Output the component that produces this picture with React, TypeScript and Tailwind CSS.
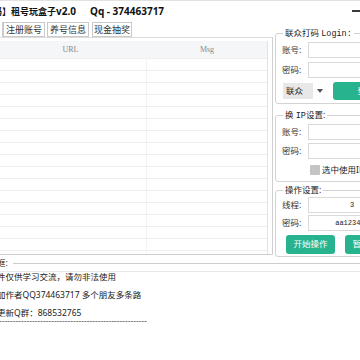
import { ReactNode } from 'react';

const tabs = ['注册账号', '养号信息', '现金抽奖'];
const rows = Array.from({ length: 17 });

function Group({ title, className, children }: { title: ReactNode; className?: string; children: ReactNode }) {
  return (
    <fieldset className={`w-[130px] border border-[#d3d3d3] rounded-[3px] ${className ?? ''}`}>
      <legend className="ml-[7px] px-[2px] text-[8.5px] leading-[12px] text-[#222]">{title}</legend>
      {children}
    </fieldset>
  );
}

function Field({ label, value }: { label: string; value?: string }) {
  return (
    <div className="h-[16px] flex items-center">
      <span className="w-[26px] text-[8.5px] text-[#333]">{label}</span>
      <div className="w-[88px] h-[16px] border border-[#d9d9d9] bg-white flex items-center justify-center font-['Liberation_Mono',monospace] text-[7px] text-[#222]">
        {value}
      </div>
    </div>
  );
}

function TealButton({ label, className }: { label: string; className: string }) {
  return (
    <button className={`rounded-[3px] bg-[#26b38e] text-white text-[8.5px] flex items-center justify-center shrink-0 ${className}`}>
      {label}
    </button>
  );
}

export default function App() {
  return (
    <div className="w-[360px] h-[360px] overflow-hidden bg-white text-[#222] font-['Noto_Sans','Noto_Sans_CJK_SC',sans-serif] flex flex-col">
      {/* title bar */}
      <div className="h-[21px] shrink-0 flex items-center border-t border-[#e2e2e2] whitespace-nowrap">
        <span className="ml-[-43px] text-[9px] font-bold text-[#111]">
          【联众打码】租号玩盒子<span className="text-[10px]">v2.0</span>
        </span>
        <span className="ml-[14px] text-[10px] font-bold text-[#111]">Qq - 374463717</span>
        <span className="ml-auto mr-[-2px] w-[10px] h-[2px] bg-[#3a3a3a]" />
      </div>

      <div className="h-[234px] shrink-0 flex">
        {/* left: tabs + grid */}
        <div className="w-[273px] shrink-0 flex flex-col">
          <div className="h-[16px] flex items-start">
            <div className="w-[3px] h-[15px] mt-[1px] border-r border-[#cacaca]" />
            {tabs.map((t, i) => (
              <div
                key={t}
                className={`h-[15px] mt-[1px] border border-[#cacaca] bg-white text-[9px] text-[#333] flex items-center justify-center ${
                  i === 0 ? 'w-[42px]' : i === 1 ? 'ml-[2px] w-[42px]' : 'ml-[3px] w-[40px]'
                }`}
              >
                {t}
              </div>
            ))}
          </div>
          <div className="h-[218px] border-t border-t-[#dcdcdc] border-r border-b border-r-[#cfcfcf] border-b-[#cfcfcf] pt-[3px] pr-[4px] overflow-hidden">
            <div className="ml-[-6px] h-full border-r border-[#e2e2e2] flex flex-col overflow-hidden">
              <div className="h-[18px] shrink-0 flex bg-[#f5f6f7] border-b border-[#f0f0f0] text-[8px] text-[#8a8a8a] font-['Liberation_Serif',serif]">
                <div className="w-[153px] flex items-center justify-center">URL</div>
                <div className="flex-1 flex items-center justify-center">Msg</div>
              </div>
              {rows.map((_, i) => (
                <div key={i} className="h-[12px] shrink-0 flex border-b border-[#eeeeee]">
                  <div className="w-[153px] border-r border-[#f2f2f2]" />
                  <div className="flex-1" />
                </div>
              ))}
            </div>
          </div>
        </div>

        {/* right: settings */}
        <div className="ml-[2px] flex flex-col">
          <Group
            className="mt-[6px]"
            title={
              <>
                联众打码 <span className="font-['Liberation_Mono',monospace]">Login:</span>
              </>
            }
          >
            <div className="pt-[2px] pb-[3px] pl-[6px] flex flex-col gap-[4px]">
              <Field label="账号:" />
              <Field label="密码:" />
              <div className="h-[18px] flex items-center">
                <span className="ml-[1px] w-[30px] h-[16px] bg-[#e8e8e8] text-[8.5px] flex items-center pl-[3px]">联众</span>
                <svg className="ml-[4px] shrink-0" width="6" height="4" viewBox="0 0 6 4">
                  <path d="M0 0h6L3 4z" fill="#555" />
                </svg>
                <TealButton label="登录" className="ml-[10px] w-[66px] h-[18px]" />
              </div>
            </div>
          </Group>

          <Group
            className="mt-[5px]"
            title={
              <>
                换 <span className="font-['Liberation_Mono',monospace]">IP</span>设置:
              </>
            }
          >
            <div className="pt-[2px] pb-[3px] pl-[6px] flex flex-col gap-[3px]">
              <Field label="账号:" />
              <Field label="密码:" />
              <div className="h-[16px] flex items-center pl-[28px]">
                <span className="w-[10px] h-[10px] bg-[#c4c4c4] rounded-[1px] shrink-0" />
                <span className="ml-[2px] text-[8.5px] whitespace-nowrap">选中使用IP代理</span>
              </div>
            </div>
          </Group>

          <Group className="mt-[2px]" title="操作设置:">
            <div className="pt-[1px] pb-[2px] pl-[6px] flex flex-col gap-[2px]">
              <Field label="线程:" value="3" />
              <Field label="密码:" value="aa123456" />
              <div className="mt-[2px] h-[19px] flex items-center pl-[4px] gap-[10px]">
                <TealButton label="开始操作" className="w-[49px] h-[19px]" />
                <TealButton label="暂停操作" className="w-[49px] h-[19px]" />
              </div>
            </div>
          </Group>
        </div>
      </div>

      {/* log */}
      <fieldset className="mt-[2px] ml-[-20px] w-[400px] flex-1 border-t border-[#cdcdcd]">
        <legend className="pr-[5px] text-[8.5px] leading-[12px]">日志框:</legend>
        <div className="mt-[2px] h-full border-t border-[#e8e8e8] text-[8.5px] text-[#222] flex flex-col whitespace-nowrap">
          <div className="leading-[10px]">本软件仅供学习交流，请勿非法使用</div>
          <div className="mt-[8px] leading-[10px]">有事加作者QQ374463717 多个朋友多条路</div>
          <div className="mt-[8px] leading-[9px]">软件更新Q群：868532765</div>
          <div className="leading-[8px] text-[#555]">-------------------------------------------------------------</div>
        </div>
      </fieldset>
    </div>
  );
}
